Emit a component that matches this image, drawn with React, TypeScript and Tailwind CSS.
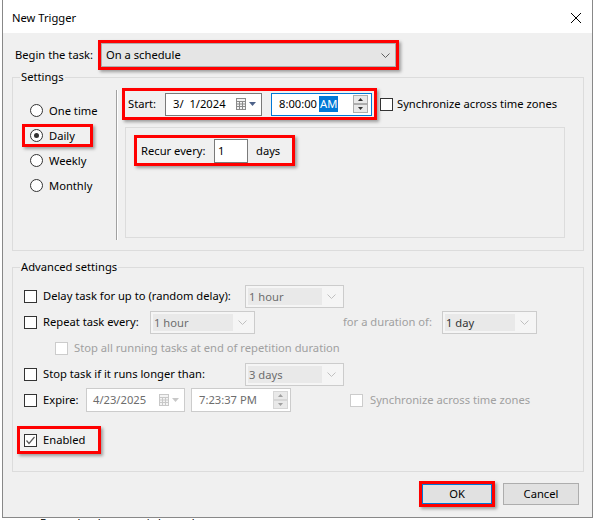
import React from 'react'

function RedBox({ className, children }: { className: string; children?: React.ReactNode }) {
  return (
    <div className={`border-[3px] border-[#ff0000] shadow-[2px_2px_3px_rgba(0,0,0,0.35)] ${className}`}>
      {children}
    </div>
  )
}

function Check({ checked, disabled }: { checked?: boolean; disabled?: boolean }) {
  return (
    <span
      className={`w-[13px] h-[13px] shrink-0 border bg-white flex items-center justify-center ${
        disabled ? 'border-[#cccccc]' : 'border-[#333333]'
      }`}
    >
      {checked && (
        <svg width="11" height="11" viewBox="0 0 11 11">
          <path d="M1.5 5.5 L4 8.5 L9.5 2" fill="none" stroke="#5a5a5a" strokeWidth="1.2" />
        </svg>
      )}
    </span>
  )
}

function Radio({ checked }: { checked?: boolean }) {
  return (
    <span className="w-[13px] h-[13px] shrink-0 rounded-full border border-[#333333] bg-white flex items-center justify-center">
      {checked && <span className="w-[5px] h-[5px] rounded-full bg-[#333333]" />}
    </span>
  )
}

function Chevron({ color }: { color: string }) {
  return (
    <svg width="9" height="5" viewBox="0 0 9 5">
      <path d="M0.5 0.5 L4.5 4.5 L8.5 0.5" fill="none" stroke={color} strokeWidth="1" />
    </svg>
  )
}

function CalendarIcon({ faded }: { faded?: boolean }) {
  const c = faded ? '#c8c8c8' : '#8a8a8a'
  const a = faded ? '#c8c8c8' : '#4d6289'
  return (
    <span className="flex items-center gap-[3px]">
      <svg width="10" height="12" viewBox="0 0 10 12">
        <rect x="0.5" y="0.5" width="9" height="11" fill="#f4f4f4" stroke={c} />
        <path d="M0.5 3.5 H9.5 M0.5 6 H9.5 M0.5 8.5 H9.5 M3.5 3.5 V11.5 M6.5 3.5 V11.5" stroke={c} strokeWidth="1" />
      </svg>
      <svg width="7" height="4" viewBox="0 0 7 4">
        <path d="M0 0 H7 L3.5 4 Z" fill={a} />
      </svg>
    </span>
  )
}

function Spinner({ faded }: { faded?: boolean }) {
  const b = faded ? '#d6d6d6' : '#adadad'
  const f = faded ? '#a0a0a0' : '#333333'
  return (
    <svg width="15" height="18" viewBox="0 0 15 18">
      <rect x="0.5" y="0.5" width="14" height="8" fill="#e9e9e9" stroke={b} />
      <rect x="0.5" y="9.5" width="14" height="8" fill="#e9e9e9" stroke={b} />
      <path d="M5 6 L7.5 3 L10 6 Z" fill={f} />
      <path d="M5 12 L7.5 15 L10 12 Z" fill={f} />
    </svg>
  )
}

function DisabledCombo({ value, width, dark }: { value: string; width: string; dark?: boolean }) {
  return (
    <div className={`${width} h-[23px] border border-[#cccccc] bg-[#f5f5f5] flex items-center p-[2px]`}>
      <span className={`flex-1 h-full bg-[#e9e9e9] pl-[1px] leading-[17px] ${dark ? 'text-[#333333]' : 'text-[#6d6d6d]'}`}>
        {value}
      </span>
      <span className="w-[19px] flex justify-center">
        <Chevron color="#c0c0c0" />
      </span>
    </div>
  )
}

function GroupBox({ title, className, children }: { title: string; className: string; children?: React.ReactNode }) {
  return (
    <div className={`relative w-[572px] border border-[#dcdcdc] ${className}`}>
      <span className="absolute -top-[9px] left-[7px] px-[1px] bg-[#f0f0f0]">{title}</span>
      {children}
    </div>
  )
}

export default function App() {
  return (
    <div className="w-[594px] h-[520px] overflow-hidden bg-white text-[11.2px] leading-[16px] text-black whitespace-nowrap font-['Noto_Sans',sans-serif]">
      <div className="ml-[2px] w-[591px] h-[518px] border-x border-b border-[#888888] flex flex-col">
        {/* title bar */}
        <div className="h-[33px] bg-white flex items-center justify-between pl-[9px] pr-[11px] pt-[3px]">
          <span>New Trigger</span>
          <svg width="10" height="10" viewBox="0 0 10 10">
            <path d="M0 0 L10 10 M10 0 L0 10" stroke="#000" strokeWidth="1" />
          </svg>
        </div>

        <div className="flex-1 bg-[#f0f0f0] pl-[9px] pt-[7px]">
          {/* begin the task */}
          <div className="flex items-center h-[30px]">
            <span className="w-[86px] pl-[3px]">Begin the task:</span>
            <RedBox className="w-[301px] h-[30px]">
              <div className="w-full h-full border border-[#adadad] bg-[#e5e5e5] flex items-center justify-between pl-[4px] pr-[5px]">
                <span>On a schedule</span>
                <Chevron color="#606060" />
              </div>
            </RedBox>
          </div>

          {/* settings */}
          <GroupBox title="Settings" className="mt-[7px] h-[174px] flex">
            <div className="w-[103px] pl-[17px] pt-[20px] flex flex-col">
              <div className="h-[25px] flex items-center">
                <Radio />
                <span className="ml-[6px]">One time</span>
              </div>
              <div className="h-[25px] flex items-center -ml-[8px]">
                <RedBox className="w-[71px] h-[23px] flex items-center pl-[5px]">
                  <Radio checked />
                  <span className="ml-[6px]">Daily</span>
                </RedBox>
              </div>
              <div className="h-[25px] flex items-center">
                <Radio />
                <span className="ml-[6px]">Weekly</span>
              </div>
              <div className="h-[25px] flex items-center">
                <Radio />
                <span className="ml-[6px]">Monthly</span>
              </div>
            </div>

            <div className="mt-[12px] h-[150px] w-[2px] border-l border-l-[#a0a0a0] border-r border-r-white" />

            <div className="flex flex-col">
              <div className="flex items-center ml-[4px] mt-[10px]">
                <RedBox className="w-[255px] h-[32px] flex items-center pl-[3px]">
                  <span className="w-[37px]">Start:</span>
                  <div className="w-[97px] h-[23px] border border-[#7a7a7a] bg-white flex items-center pl-[7px] pr-[5px]">
                    <span className="whitespace-pre">3/  1/2024</span>
                    <span className="ml-auto">
                      <CalendarIcon />
                    </span>
                  </div>
                  <div className="ml-[9px] w-[101px] h-[23px] border border-[#0078d7] bg-white flex items-center pl-[7px] pr-[3px]">
                    <span>8:00:00</span>
                    <span className="ml-[2px] px-[1px] bg-[#0078d7] text-white">AM</span>
                    <span className="ml-auto">
                      <Spinner />
                    </span>
                  </div>
                </RedBox>
                <span className="ml-[3px]">
                  <Check />
                </span>
                <span className="ml-[4px]">Synchronize across time zones</span>
              </div>

              <div className="ml-[7px] mt-[7px] w-[440px] h-[111px] border border-[#dcdcdc]">
                <RedBox className="ml-[8px] mt-[7px] w-[161px] h-[31px] flex items-center pl-[4px]">
                  <span className="w-[73px]">Recur every:</span>
                  <div className="w-[34px] h-[24px] border border-[#7a7a7a] bg-white flex items-center pl-[3px]">1</div>
                  <span className="ml-[8px]">days</span>
                </RedBox>
              </div>
            </div>
          </GroupBox>

          {/* advanced settings */}
          <GroupBox title="Advanced settings" className="mt-[16px] h-[205px] flex flex-col pl-[11px] pt-[15px]">
            <div className="h-[26px] flex items-center">
              <Check />
              <span className="ml-[6px] w-[202px]">Delay task for up to (random delay):</span>
              <DisabledCombo value="1 hour" width="w-[99px]" />
            </div>
            <div className="h-[26px] flex items-center">
              <Check />
              <span className="ml-[6px] w-[107px]">Repeat task every:</span>
              <DisabledCombo value="1 hour" width="w-[105px]" />
              <span className="ml-[88px] w-[99px] text-[#a0a0a0]">for a duration of:</span>
              <DisabledCombo value="1 day" width="w-[95px]" dark />
            </div>
            <div className="h-[26px] flex items-center">
              <span className="ml-[31px]">
                <Check disabled />
              </span>
              <span className="ml-[6px] text-[#a0a0a0]">Stop all running tasks at end of repetition duration</span>
            </div>
            <div className="h-[26px] flex items-center">
              <Check />
              <span className="ml-[6px] w-[202px]">Stop task if it runs longer than:</span>
              <DisabledCombo value="3 days" width="w-[99px]" />
            </div>
            <div className="h-[26px] flex items-center">
              <Check />
              <span className="ml-[6px] w-[43px]">Expire:</span>
              <div className="w-[99px] h-[24px] border border-[#cccccc] bg-white flex items-center pl-[6px] pr-[5px] text-[#6d6d6d]">
                <span>4/23/2025</span>
                <span className="ml-auto">
                  <CalendarIcon faded />
                </span>
              </div>
              <div className="ml-[6px] w-[100px] h-[24px] border border-[#cccccc] bg-white flex items-center pl-[7px] pr-[2px] text-[#6d6d6d]">
                <span>7:23:37 PM</span>
                <span className="ml-auto">
                  <Spinner faded />
                </span>
              </div>
              <span className="ml-[59px]">
                <Check disabled />
              </span>
              <span className="ml-[7px] text-[#a0a0a0]">Synchronize across time zones</span>
            </div>
            <RedBox className="mt-[13px] -ml-[7px] w-[84px] h-[28px] flex items-center pl-[4px]">
              <Check checked />
              <span className="ml-[6px]">Enabled</span>
            </RedBox>
          </GroupBox>

          {/* buttons */}
          <div className="mt-[9px] w-[567px] flex justify-end items-center gap-[8px]">
            <RedBox className="w-[76px] h-[26px] flex items-center justify-center">
              <div className="w-[70px] h-[20px] border border-[#0078d7] bg-[#e1e1e1] flex items-center justify-center">OK</div>
            </RedBox>
            <div className="w-[76px] h-[22px] border border-[#adadad] bg-[#e1e1e1] flex items-center justify-center">Cancel</div>
          </div>
        </div>
      </div>
      <div className="h-[2px] overflow-hidden pl-[40px] leading-[10px]">Run only when user is logged on</div>
    </div>
  )
}
